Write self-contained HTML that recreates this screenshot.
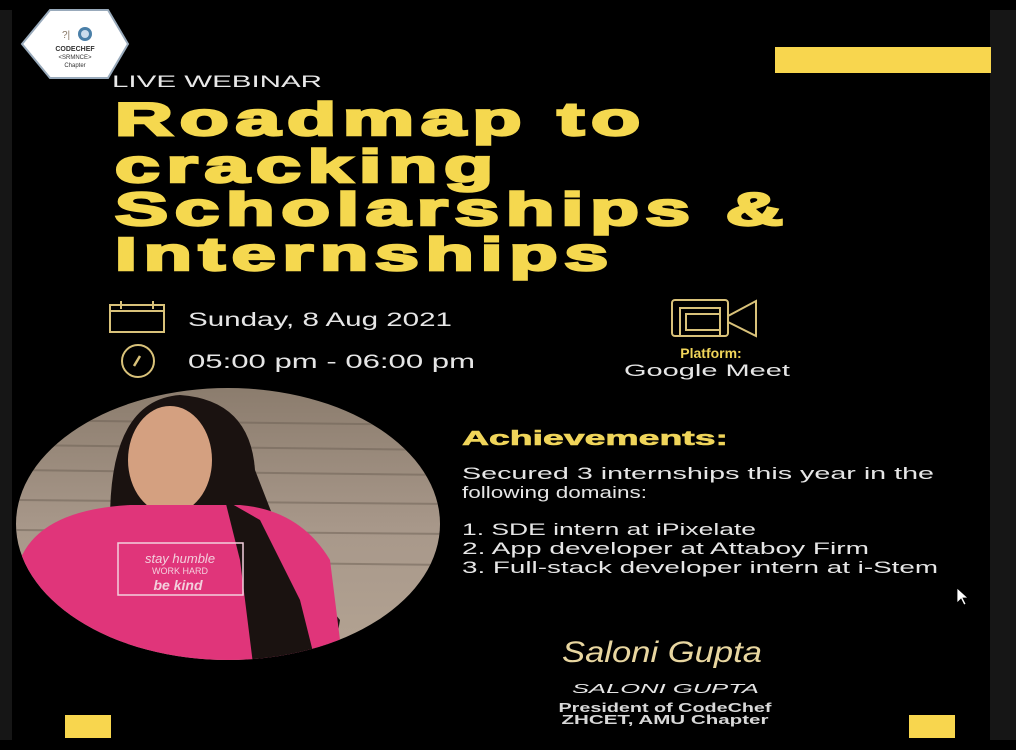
<!DOCTYPE html>
<html><head><meta charset="utf-8"><style>
html,body{margin:0;padding:0;background:#000;width:1016px;height:750px;overflow:hidden}
svg{display:block}
text{font-family:"Liberation Sans",Arial,sans-serif}
</style></head><body>
<svg width="1016" height="750" viewBox="0 0 1016 750" xmlns="http://www.w3.org/2000/svg">
<defs>
<clipPath id="ph"><ellipse cx="228" cy="524" rx="212" ry="136"/></clipPath>
<linearGradient id="wall" x1="0" y1="0" x2="0" y2="1">
<stop offset="0" stop-color="#8a7b6c"/><stop offset="0.5" stop-color="#a8988a"/><stop offset="1" stop-color="#b5a594"/>
</linearGradient>
</defs>
<rect width="1016" height="750" fill="#000"/>
<rect x="0" y="10" width="12" height="730" fill="#161616"/>
<rect x="990" y="10" width="26" height="730" fill="#161616"/>

<polygon points="50,10 108,10 128,44 108,78 50,78 22,44" fill="#fff" stroke="#9ab" stroke-width="2"/>
<circle cx="85" cy="34" r="7" fill="#4a7fa8"/><circle cx="85" cy="34" r="4" fill="#cde"/>
<text x="62" y="38" font-size="10" fill="#876">?|</text>
<text x="75" y="51" font-size="7" font-weight="bold" fill="#333" text-anchor="middle">CODECHEF</text>
<text x="75" y="59" font-size="6" fill="#333" text-anchor="middle">&lt;SRMNCE&gt;</text>
<text x="75" y="67" font-size="6" fill="#333" text-anchor="middle">Chapter</text>

<text x="112" y="87" font-size="17" fill="#e8e8e8" textLength="210" lengthAdjust="spacingAndGlyphs">LIVE WEBINAR</text>
<rect x="775" y="47" width="216" height="26" fill="#f8d64e"/>

<g fill="#f5d84f" stroke="#f5d84f" stroke-width="2.5" font-weight="900" font-size="46" letter-spacing="4">
<text x="115" y="135" textLength="532" lengthAdjust="spacingAndGlyphs">Roadmap to</text>
<text x="115" y="182" textLength="385" lengthAdjust="spacingAndGlyphs">cracking</text>
<text x="115" y="225" textLength="675" lengthAdjust="spacingAndGlyphs">Scholarships &amp;</text>
<text x="115" y="270" textLength="500" lengthAdjust="spacingAndGlyphs">Internships</text>
</g>

<g fill="none" stroke="#d9c27a" stroke-width="2">
<rect x="110" y="305" width="54" height="27"/>
<line x1="110" y1="311" x2="164" y2="311"/>
<line x1="121" y1="301" x2="121" y2="309"/><line x1="153" y1="301" x2="153" y2="309"/>
<circle cx="138" cy="361" r="16"/>
<line x1="134" y1="366" x2="140" y2="356" stroke-width="2.5"/>
<rect x="672" y="300" width="56" height="36" rx="3"/>
<rect x="680" y="308" width="40" height="28"/>
<rect x="686" y="314" width="34" height="16"/>
<path d="M728 316 L756 301 L756 336 L728 322"/>
</g>
<text x="188" y="326" font-size="19" fill="#e6e6e6" textLength="264" lengthAdjust="spacingAndGlyphs">Sunday,  8 Aug 2021</text>
<text x="188" y="368" font-size="19" fill="#e6e6e6" textLength="287" lengthAdjust="spacingAndGlyphs">05:00 pm - 06:00 pm</text>
<text x="711" y="358" font-size="14" font-weight="bold" fill="#f0d55a" text-anchor="middle">Platform:</text>
<text x="707" y="376" font-size="17" fill="#e6e6e6" text-anchor="middle" textLength="166" lengthAdjust="spacingAndGlyphs">Google Meet</text>

<g clip-path="url(#ph)">
<rect x="12" y="380" width="440" height="300" fill="url(#wall)"/>
<g stroke="#6d6054" stroke-width="2" opacity="0.5">
<line x1="12" y1="420" x2="450" y2="425"/><line x1="12" y1="445" x2="450" y2="450"/><line x1="12" y1="470" x2="450" y2="475"/>
<line x1="12" y1="500" x2="450" y2="504"/><line x1="12" y1="530" x2="450" y2="534"/><line x1="12" y1="560" x2="450" y2="565"/>
</g>
<path d="M110 520 Q110 400 180 395 Q250 400 255 470 L290 560 L340 620 L330 680 L250 680 L240 560 L100 560 Z" fill="#1a1210"/>
<ellipse cx="170" cy="460" rx="42" ry="54" fill="#d4a080"/>
<path d="M20 560 Q40 510 130 505 L240 505 Q300 510 330 560 L345 680 L20 680 Z" fill="#e0357a"/>
<path d="M225 500 L260 520 L300 600 L320 680 L255 680 L240 560 Z" fill="#1a1210"/>
<rect x="118" y="543" width="125" height="52" fill="none" stroke="#f3d0dd" stroke-width="1.5"/>
<text x="180" y="563" font-size="13" font-style="italic" fill="#f3d0dd" text-anchor="middle">stay humble</text>
<text x="180" y="574" font-size="9" fill="#f3d0dd" text-anchor="middle">WORK HARD</text>
<text x="178" y="590" font-size="14" font-style="italic" font-weight="bold" fill="#f3d0dd" text-anchor="middle">be kind</text>
</g>

<text x="462" y="445" font-size="20" font-weight="900" fill="#f0d55a" stroke="#f0d55a" stroke-width="0.6" textLength="266" lengthAdjust="spacingAndGlyphs">Achievements:</text>
<g font-size="17" fill="#e6e6e6">
<text x="462" y="479" textLength="472" lengthAdjust="spacingAndGlyphs">Secured 3 internships this year in the</text>
<text x="462" y="498" textLength="185" lengthAdjust="spacingAndGlyphs">following domains:</text>
<text x="462" y="535" textLength="294" lengthAdjust="spacingAndGlyphs">1. SDE intern at iPixelate</text>
<text x="462" y="554" textLength="407" lengthAdjust="spacingAndGlyphs">2. App developer at Attaboy Firm</text>
<text x="462" y="573" textLength="476" lengthAdjust="spacingAndGlyphs">3. Full-stack developer intern at i-Stem</text>
</g>
<path d="M957 588 L957 603 L961 599 L964 605 L966 604 L963 598 L968 598 Z" fill="#fff" stroke="#000" stroke-width="0.8"/>

<text x="562" y="662" font-size="30" font-style="italic" fill="#e8d6a0" font-family="Liberation Serif,serif" textLength="200" lengthAdjust="spacingAndGlyphs">Saloni Gupta</text>
<text x="572" y="693" font-size="13" font-style="italic" fill="#e6e6e6" textLength="187" lengthAdjust="spacingAndGlyphs">SALONI GUPTA</text>
<text x="665" y="712" font-size="12.5" font-weight="bold" fill="#d8d8d8" text-anchor="middle" textLength="213" lengthAdjust="spacingAndGlyphs">President of CodeChef</text>
<text x="665" y="724" font-size="12.5" font-weight="bold" fill="#d8d8d8" text-anchor="middle" textLength="207" lengthAdjust="spacingAndGlyphs">ZHCET, AMU Chapter</text>

<rect x="65" y="715" width="46" height="23" fill="#f8d64e"/>
<rect x="909" y="715" width="46" height="23" fill="#f8d64e"/>
</svg>
</body></html>
